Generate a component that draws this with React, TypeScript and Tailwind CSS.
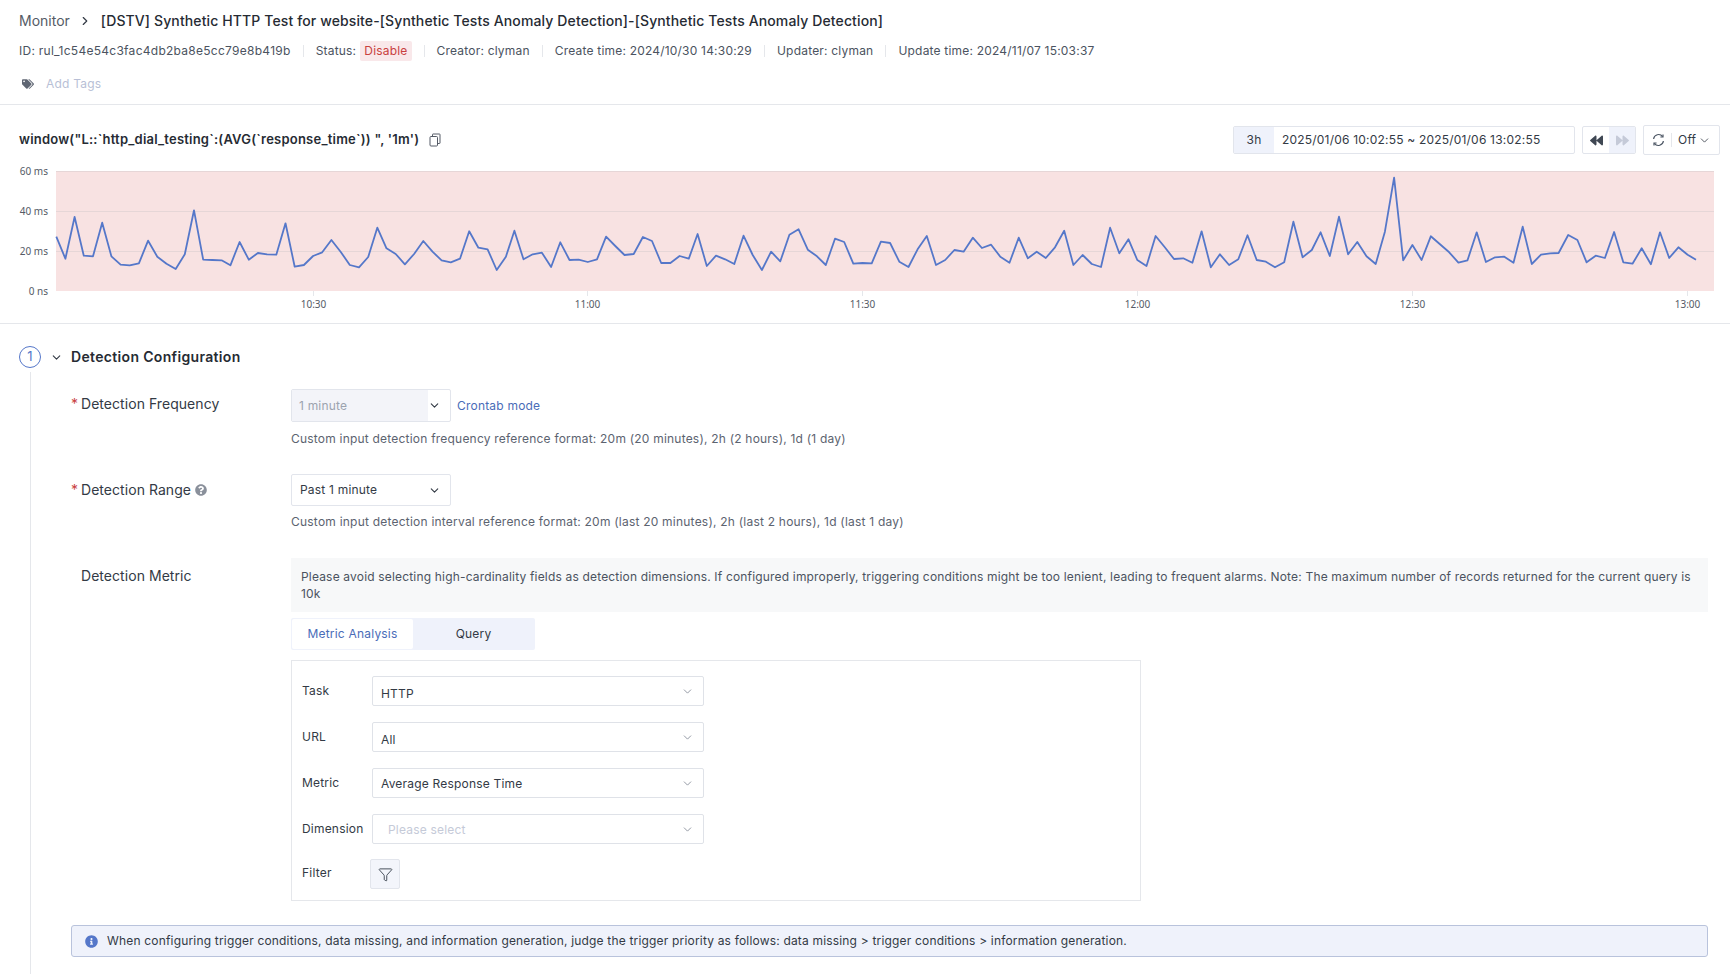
import * as React from 'react';
import { ChevronDown, ChevronRight, Filter } from 'lucide-react';
import { FaBackward, FaForward, FaInfoCircle, FaQuestionCircle, FaTags } from 'react-icons/fa';

// chart samples, one per minute, read from the reference: [x, y]
const seriesA = [
  [147, 230], [171, 296], [195, 171], [219, 287], [243, 289], [267, 188], [291, 289], [315, 314], [339, 316], [363, 310],
  [387, 242], [411, 290], [435, 311], [459, 327], [483, 283], [507, 151], [531, 299], [555, 300], [579, 301], [602, 316],
  [626, 246], [650, 299], [674, 279], [698, 283], [722, 284], [746, 190], [770, 320], [794, 315], [818, 288], [842, 277],
  [866, 240], [890, 275], [914, 315], [938, 322], [962, 291], [986, 203], [1010, 265], [1034, 282], [1058, 313], [1082, 282],
  [1106, 243], [1130, 275], [1154, 301], [1178, 307], [1202, 296], [1226, 214], [1250, 263], [1274, 268], [1298, 330], [1322, 290],
  [1344, 212], [1368, 298], [1392, 283], [1416, 278], [1440, 321], [1464, 247], [1488, 300], [1512, 299], [1536, 306], [1560, 298],
];
const seriesB = [
  [16, 230], [40, 258], [64, 285], [88, 282], [112, 231], [136, 243], [160, 309], [184, 309], [208, 288], [232, 296],
  [255, 222], [279, 318], [303, 287], [327, 298], [351, 312], [375, 227], [399, 285], [423, 330], [447, 275], [471, 304],
  [495, 224], [519, 208], [543, 269], [567, 289], [590, 315], [614, 236], [638, 246], [662, 311], [686, 309], [710, 310],
  [734, 245], [758, 249], [782, 305], [806, 321], [830, 268], [854, 228], [878, 315], [902, 300], [926, 270], [950, 275],
  [974, 233], [998, 264], [1022, 254], [1046, 290], [1070, 308], [1094, 233], [1118, 295], [1141, 275], [1165, 294], [1189, 262],
  [1213, 212], [1237, 315], [1261, 285], [1285, 312], [1309, 321], [1333, 203], [1357, 280], [1381, 238],
];
const seriesC = [
  [19, 300], [43, 318], [67, 228], [91, 262], [115, 297], [139, 295], [163, 308], [187, 214], [211, 322], [235, 283],
  [259, 315], [283, 298], [307, 226], [331, 300], [355, 305], [379, 322], [403, 307], [427, 185], [451, 292], [475, 270],
  [498, 217], [522, 288], [546, 170], [570, 283], [594, 246], [618, 289], [642, 312], [666, 215], [690, 53], [714, 301],
  [738, 255], [762, 300], [786, 229], [810, 253], [834, 277], [858, 308], [882, 301], [906, 217], [930, 306], [954, 292],
  [978, 290], [1002, 308], [1026, 200], [1050, 312], [1074, 284], [1098, 280], [1120, 279], [1145, 225], [1169, 240], [1193, 307],
  [1217, 287], [1241, 294], [1265, 216], [1289, 307], [1313, 311], [1337, 265], [1361, 313], [1385, 217], [1409, 294], [1433, 262],
  [1457, 284], [1479, 299],
];

const toPoints = (rows: number[][], left: number) =>
  rows.map(([x, y]) => `${(left + x / 2.613).toFixed(1)},${(5 + y / 3).toFixed(1)}`).join(' ');

const linePoints = [toPoints(seriesA, 0), toPoints(seriesB, 600), toPoints(seriesC, 1130)].join(' ');

const yTicks = [
  { label: '60 ms', y: 16 },
  { label: '40 ms', y: 56 },
  { label: '20 ms', y: 96 },
  { label: '0 ns', y: 136 },
];
const xTicks = [
  { label: '10:30', x: 313.5 },
  { label: '11:00', x: 587.5 },
  { label: '11:30', x: 862.5 },
  { label: '12:00', x: 1137.5 },
  { label: '12:30', x: 1412.5 },
  { label: '13:00', x: 1687.5 },
];

function ResponseChart() {
  return (
    <svg width="1730" height="168" className="block tracking-normal">
      <rect x="56" y="16" width="1658" height="120" fill="#f8e2e2" />
      <line x1="56" x2="1714" y1="16.5" y2="16.5" stroke="#e6d6d7" />
      <line x1="56" x2="1714" y1="56.5" y2="56.5" stroke="#e6d6d7" />
      <line x1="56" x2="1714" y1="96.5" y2="96.5" stroke="#e6d6d7" />
      <polyline points={linePoints} fill="none" stroke="#5577c9" strokeWidth="1.8" strokeLinejoin="round" />
      {yTicks.map((t) => (
        <text key={t.label} x="48" y={t.y + 3.5} textAnchor="end" fontSize="10" fill="#555b66" fontFamily="'Noto Sans', sans-serif">
          {t.label}
        </text>
      ))}
      {xTicks.map((t) => (
        <g key={t.label}>
          <line x1={t.x} x2={t.x} y1="136" y2="141" stroke="#e5e7eb" />
          <text x={t.x} y="152.5" textAnchor="middle" fontSize="10" fill="#555b66" fontFamily="'Noto Sans', sans-serif">
            {t.label}
          </text>
        </g>
      ))}
    </svg>
  );
}

function Sep() {
  return <span className="mx-3 h-3 w-px bg-[#e5e7eb]" />;
}

function CopyIcon() {
  return (
    <svg width="14" height="14" viewBox="0 0 14 14" fill="none" stroke="#555b66" strokeWidth="1">
      <rect x="2" y="3.5" width="7.5" height="9.5" rx="1" />
      <path d="M4.5 3.5V1.5a.5.5 0 0 1 .5-.5h6.5a.5.5 0 0 1 .5.5V10a.5.5 0 0 1-.5.5H9.5" />
    </svg>
  );
}

function RefreshIcon() {
  return (
    <svg width="13" height="14" viewBox="0 0 13 14" fill="none" stroke="#4b5563" strokeWidth="1.2">
      <path d="M1.6 6A5 5 0 0 1 10.6 3.6" />
      <path d="M11.4 8A5 5 0 0 1 2.4 10.4" />
      <path d="M11 1.4v2.6H8.4" />
      <path d="M2 12.6V10h2.6" />
    </svg>
  );
}

function FieldSelect({ value, placeholder, low }: { value?: string; placeholder?: string; low?: boolean }) {
  return (
    <div className="flex h-[30px] w-[332px] items-center justify-between rounded-[2px] border border-[#dfe2e8] pr-[9px]">
      {value ? (
        <span className={low ? 'mt-[6px] pl-[8px] text-[12px] text-[#333a45]' : 'mt-[2px] pl-[8px] text-[12px] text-[#333a45]'}>{value}</span>
      ) : (
        <span className="mt-[2px] pl-[15px] text-[12px] text-[#c5cad8]">{placeholder}</span>
      )}
      <ChevronDown size={13} strokeWidth={1.5} className="text-[#7b8290]" />
    </div>
  );
}

function MetricField({ label, value, placeholder, low }: { label: string; value?: string; placeholder?: string; low?: boolean }) {
  return (
    <div className="flex h-[30px] items-center">
      <span className="w-[70px] text-[12px] text-[#333a45]">{label}</span>
      <FieldSelect value={value} placeholder={placeholder} low={low} />
    </div>
  );
}

function Required() {
  return <span className="w-[10px] text-[14px] text-[#c9413f]">*</span>;
}

export default function App() {
  return (
    <div className="flex h-[974px] w-[1730px] flex-col overflow-hidden bg-white font-[Inter,sans-serif] tracking-[0.2px] text-[#333a45]">
      <header className="h-[105px] shrink-0 border-b border-[#e5e7eb] px-[19px]">
        <div className="mt-[11px] flex h-5 items-center text-[14px] leading-5 tracking-normal">
          <span className="text-[#555b66]">Monitor</span>
          <ChevronRight size={14} strokeWidth={2} className="ml-[8px] mr-[9px] text-[#333a45]" />
          <span className="font-medium tracking-[0.12px] text-[#262b33]">
            [DSTV] Synthetic HTTP Test for website-[Synthetic Tests Anomaly Detection]-[Synthetic Tests Anomaly Detection]
          </span>
        </div>
        <div className="mt-[10px] flex h-5 items-center text-[12px] text-[#4b5360]">
          <span className="tracking-[0.27px]">ID: rul_1c54e54c3fac4db2ba8e5cc79e8b419b</span>
          <Sep />
          <span>Status:</span>
          <span className="ml-[4px] flex h-5 items-center rounded-[2px] bg-[#f9e8ea] px-[4px] text-[#c9413f]">Disable</span>
          <Sep />
          <span>Creator: clyman</span>
          <Sep />
          <span>Create time: 2024/10/30 14:30:29</span>
          <Sep />
          <span>Updater: clyman</span>
          <Sep />
          <span>Update time: 2024/11/07 15:03:37</span>
        </div>
        <div className="mt-[13px] flex h-5 items-center">
          <FaTags size={12} className="ml-[3px] text-[#5f6673]" />
          <span className="ml-[12px] text-[12px] text-[#b8bfd6]">Add Tags</span>
        </div>
      </header>

      <section className="shrink-0 border-b border-[#e5e7eb]">
        <div className="mt-[20px] flex h-[30px] items-center justify-between pl-[19px] pr-[10px]">
          <div className="flex items-center">
            <span className="text-[13px] font-semibold tracking-[0.22px] text-[#262b33]">
              window("L::`http_dial_testing`:(AVG(`response_time`)) ", '1m')
            </span>
            <span className="ml-[9px]">
              <CopyIcon />
            </span>
          </div>
          <div className="flex items-center">
            <div className="flex h-[28px] w-[342px] overflow-hidden rounded-[2px] border border-[#e2e5ec] text-[12px]">
              <span className="flex w-[40px] items-center justify-center bg-[#eff2fb]">3h</span>
              <span className="flex items-center pl-[8px]">2025/01/06 10:02:55 ~ 2025/01/06 13:02:55</span>
            </div>
            <div className="ml-[7px] flex h-[28px] w-[54px] overflow-hidden rounded-[2px] border border-[#e2e5ec]">
              <span className="flex flex-1 items-center justify-center">
                <FaBackward size={13} className="text-[#3f4753]" />
              </span>
              <span className="flex flex-1 items-center justify-center bg-[#eff2fb]">
                <FaForward size={13} className="text-[#c5cad8]" />
              </span>
            </div>
            <div className="ml-[7px] flex h-[30px] w-[77px] items-center rounded-[2px] border border-[#e2e5ec] text-[12px]">
              <span className="ml-[8px]">
                <RefreshIcon />
              </span>
              <span className="mx-[6px] h-[14px] w-px bg-[#e5e7eb]" />
              <span>Off</span>
              <ChevronDown size={13} strokeWidth={1.5} className="ml-[2px]" />
            </div>
          </div>
        </div>
        <ResponseChart />
      </section>

      <section className="flex min-h-0 flex-1 flex-col pl-[19px] pt-[22px]">
        <div className="flex h-[22px] items-center">
          <span className="flex h-[22px] w-[22px] items-center justify-center rounded-full border border-[#5577c9] text-[13px] text-[#5577c9]">
            1
          </span>
          <ChevronDown size={13} strokeWidth={2} className="ml-[9px] text-[#333a45]" />
          <span className="-mt-[1px] ml-[8px] text-[14px] font-semibold tracking-[0.33px] text-[#262b33]">Detection Configuration</span>
        </div>

        <div className="ml-[11px] mt-[4px] flex-1 border-l border-[#e5e7eb] pl-[40px] pr-[22px] pt-[17px]">
          <div className="flex">
            <div className="mt-[5px] flex h-5 w-[220px] shrink-0 items-center text-[14px] leading-5 tracking-[0.05px]">
              <Required />
              <span>Detection Frequency</span>
            </div>
            <div>
              <div className="flex items-center">
                <div className="flex h-[33px] w-[160px] overflow-hidden rounded-[2px] border border-[#e2e5ec]">
                  <span className="flex w-[136px] items-center bg-[#f3f4f9] pl-[7px] text-[12px] text-[#9ca3af]">1 minute</span>
                  <span className="flex flex-1 items-center">
                    <ChevronDown size={13} strokeWidth={2} />
                  </span>
                </div>
                <span className="ml-[6px] text-[12px] text-[#4a6cb8]">Crontab mode</span>
              </div>
              <p className="mt-[8px] text-[12px] leading-[17px] tracking-[0.21px] text-[#5c6370]">
                Custom input detection frequency reference format: 20m (20 minutes), 2h (2 hours), 1d (1 day)
              </p>
            </div>
          </div>

          <div className="mt-[27px] flex">
            <div className="mt-[6px] flex h-5 w-[220px] shrink-0 items-center text-[14px] leading-5 tracking-[0.05px]">
              <Required />
              <span>Detection Range</span>
              <FaQuestionCircle size={12} className="ml-[4px] text-[#8a909b]" />
            </div>
            <div>
              <div className="flex h-[32px] w-[160px] items-center justify-between rounded-[2px] border border-[#e2e5ec] pl-[8px] pr-[9px] text-[12px]">
                <span>Past 1 minute</span>
                <ChevronDown size={13} strokeWidth={2} />
              </div>
              <p className="mt-[7px] text-[12px] leading-[17px] tracking-[0.22px] text-[#5c6370]">
                Custom input detection interval reference format: 20m (last 20 minutes), 2h (last 2 hours), 1d (last 1 day)
              </p>
            </div>
          </div>

          <div className="mt-[28px] flex">
            <div className="mt-[8px] h-5 w-[220px] shrink-0 pl-[10px] text-[14px] leading-5 tracking-[0.05px]">Detection Metric</div>
            <div className="min-w-0 flex-1">
              <p className="bg-[#f7f8f9] px-[10px] py-[10px] text-[12px] leading-[17px] tracking-[0.175px] text-[#4b5360]">
                Please avoid selecting high-cardinality fields as detection dimensions. If configured improperly, triggering conditions might be too lenient, leading to frequent alarms. Note: The maximum number of records returned for the current query is 10k
              </p>
              <div className="mt-[6px] flex h-[32px] w-[244px] rounded-[2px] bg-[#eff2fb] p-[1px] text-[12px]">
                <span className="flex w-[121px] items-center justify-center rounded-[2px] bg-white text-[#4a6cb8]">Metric Analysis</span>
                <span className="flex flex-1 items-center justify-center">Query</span>
              </div>
              <div className="mt-[10px] h-[241px] w-[850px] border border-[#e5e7eb] px-[10px] pt-[15px]">
                <div className="flex flex-col gap-[16px]">
                  <MetricField label="Task" value="HTTP" low />
                  <MetricField label="URL" value="All" low />
                  <MetricField label="Metric" value="Average Response Time" />
                  <MetricField label="Dimension" placeholder="Please select" />
                </div>
                <div className="mt-[15px] flex h-[30px] items-center">
                  <span className="-mt-[2px] w-[68px] text-[12px]">Filter</span>
                  <span className="flex h-[30px] w-[30px] items-center justify-center rounded-[2px] border border-[#e2e5ec] bg-[#f3f5fb]">
                    <Filter size={15} strokeWidth={1.5} className="text-[#3f4753]" />
                  </span>
                </div>
              </div>
            </div>
          </div>

          <div className="mt-[24px] flex h-[32px] items-center rounded-[3px] border border-[#b9c3dc] bg-[#eff2fb] pl-[13px] text-[12px] tracking-[0.18px]">
            <FaInfoCircle size={13} className="text-[#5577c9]" />
            <span className="ml-[9px]">
              When configuring trigger conditions, data missing, and information generation, judge the trigger priority as follows: data missing &gt; trigger conditions &gt; information generation.
            </span>
          </div>
        </div>
      </section>
    </div>
  );
}
